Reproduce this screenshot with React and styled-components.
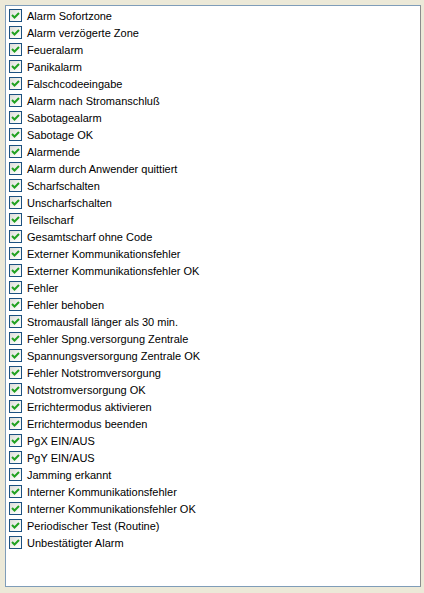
import styled, { createGlobalStyle } from 'styled-components';

const items = [
  'Alarm Sofortzone',
  'Alarm verzögerte Zone',
  'Feueralarm',
  'Panikalarm',
  'Falschcodeeingabe',
  'Alarm nach Stromanschluß',
  'Sabotagealarm',
  'Sabotage OK',
  'Alarmende',
  'Alarm durch Anwender quittiert',
  'Scharfschalten',
  'Unscharfschalten',
  'Teilscharf',
  'Gesamtscharf ohne Code',
  'Externer Kommunikationsfehler',
  'Externer Kommunikationsfehler OK',
  'Fehler',
  'Fehler behoben',
  'Stromausfall länger als 30 min.',
  'Fehler Spng.versorgung Zentrale',
  'Spannungsversorgung Zentrale OK',
  'Fehler Notstromversorgung',
  'Notstromversorgung OK',
  'Errichtermodus aktivieren',
  'Errichtermodus beenden',
  'PgX EIN/AUS',
  'PgY EIN/AUS',
  'Jamming erkannt',
  'Interner Kommunikationsfehler',
  'Interner Kommunikationsfehler OK',
  'Periodischer Test (Routine)',
  'Unbestätigter Alarm',
];

export default function App() {
  return (
    <>
      <GlobalStyle />
      <ListBox>
        {items.map((label) => (
          <Row key={label}>
            <CheckBox>
              <svg width="9" height="9" viewBox="0 0 9 9">
                <path d="M1 4 L3.5 6.5 L8 2" fill="none" stroke="#21a121" strokeWidth="2" />
              </svg>
            </CheckBox>
            <Label>{label}</Label>
          </Row>
        ))}
      </ListBox>
    </>
  );
}

const GlobalStyle = createGlobalStyle`
  body {
    margin: 0;
    background: #ece9d8;
    font-family: "Liberation Sans", Arial, sans-serif;
  }
`;

const ListBox = styled.div`
  box-sizing: border-box;
  margin: 5px 0 0 5px;
  width: 416px;
  height: 582px;
  background: #fff;
  border: 1px solid #7f9db9;
  border-right-color: #8c8c8c;
  padding: 1px 0 0 3px;
  display: flex;
  flex-direction: column;
`;

const Row = styled.div`
  display: flex;
  align-items: center;
  height: 17px;
`;

const CheckBox = styled.span`
  box-sizing: border-box;
  width: 13px;
  height: 13px;
  border: 1px solid #1c5180;
  background: linear-gradient(135deg, #dcdcd7 0%, #f5f5f2 60%, #ffffff 100%);
  display: flex;
  align-items: center;
  justify-content: center;
  flex-shrink: 0;
`;

const Label = styled.span`
  margin-left: 5px;
  font-size: 11px;
  color: #000;
  white-space: nowrap;
`;
